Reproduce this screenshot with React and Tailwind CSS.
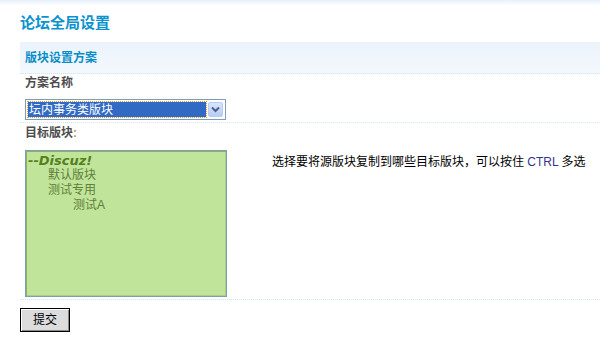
import React from "react";

const FONT = { fontFamily: '"Liberation Sans", "Noto Sans CJK SC", sans-serif' };

const ITEMS = [
  { id: "root", text: "--Discuz!", indent: 0, root: true },
  { id: "f1", text: "默认版块", indent: 20 },
  { id: "f2", text: "测试专用", indent: 20 },
  { id: "f3", text: "测试A", indent: 45 },
];

function FakeSelect() {
  return (
    <div className="ml-[5px] flex h-[21px] w-[201px] items-stretch border border-[#7f9db9] bg-white p-[2px]">
      <div className="flex flex-1 items-center bg-[#316ac5] pl-[1px] text-[12px] leading-none text-white outline-1 outline-dotted outline-[#e0a030]">
        坛内事务类版块
      </div>
      <div className="ml-[2px] flex w-[15px] items-center justify-center rounded-[2px] border border-[#b9cdf2] bg-gradient-to-b from-[#d8e5fd] to-[#b8ccf5]">
        <svg width="9" height="7" viewBox="0 0 9 7">
          <path d="M1 1.5 L4.5 5 L8 1.5" fill="none" stroke="#4d6185" strokeWidth="2" />
        </svg>
      </div>
    </div>
  );
}

export default function App() {
  return (
    <div className="h-[339px] w-[600px] overflow-hidden bg-white text-[12px] text-black" style={FONT}>
      <div className="h-[5px] bg-gradient-to-b from-[#e6f0fa] to-white" />

      {/* Title */}
      <div className="h-[37px] pl-[20px] pt-[8px] text-[15px] font-bold leading-[20px] text-[#0a93cf]">
        论坛全局设置
      </div>

      <div className="ml-[20px]">
        {/* Section header */}
        <div className="flex h-[32px] items-center border-b border-dotted border-[#d3e5f5] bg-gradient-to-b from-[#ebf3fb] to-[#f3f8fd] pl-[5px] text-[12px] font-bold text-[#0b8dc8]">
          版块设置方案
        </div>

        <div className="h-[25px] pl-[5px] pt-[1px] font-bold leading-[16px] text-[#4d4d4d]">方案名称</div>
        <div className="h-[24px] border-b border-dotted border-[#d3e5f5]">
          <FakeSelect />
        </div>

        <div className="h-[27px] pl-[5px] pt-[2px] font-bold leading-[16px] text-[#4d4d4d]">
          目标版块<span className="text-[#c09040]">:</span>
        </div>

        <div className="flex h-[150px] border-b border-dotted border-[#d3e5f5]">
          <div className="ml-[5px] h-[147px] w-[202px] border border-[#7f9db9] bg-[#c0e49a] shadow-[inset_1px_1px_0_#8fb060,inset_-1px_-1px_0_#a9cf80] pl-[2px] pt-[3px]">
            {ITEMS.map((item) => (
              <div
                key={item.id}
                className={
                  item.root
                    ? "h-[14px] text-[13px] font-bold italic leading-[14px] text-[#557f1d]"
                    : "h-[15px] text-[12px] leading-[15px] text-[#5f7f38]"
                }
                style={item.root ? { fontFamily: '"DejaVu Sans", sans-serif' } : { paddingLeft: item.indent }}
              >
                {item.text}
              </div>
            ))}
          </div>
          <div className="ml-[45px] mt-[4px] leading-[16px]">
            选择要将源版块复制到哪些目标版块，可以按住 <span className="text-[#33338a]">CTRL</span> 多选
          </div>
        </div>

        <button className="mt-[8px] h-[24px] w-[50px] border border-black bg-[#dcdcdc] text-[12px] leading-none shadow-[inset_1px_1px_0_#fff,inset_-1px_-1px_0_#888]">
          提交
        </button>
      </div>
    </div>
  );
}
